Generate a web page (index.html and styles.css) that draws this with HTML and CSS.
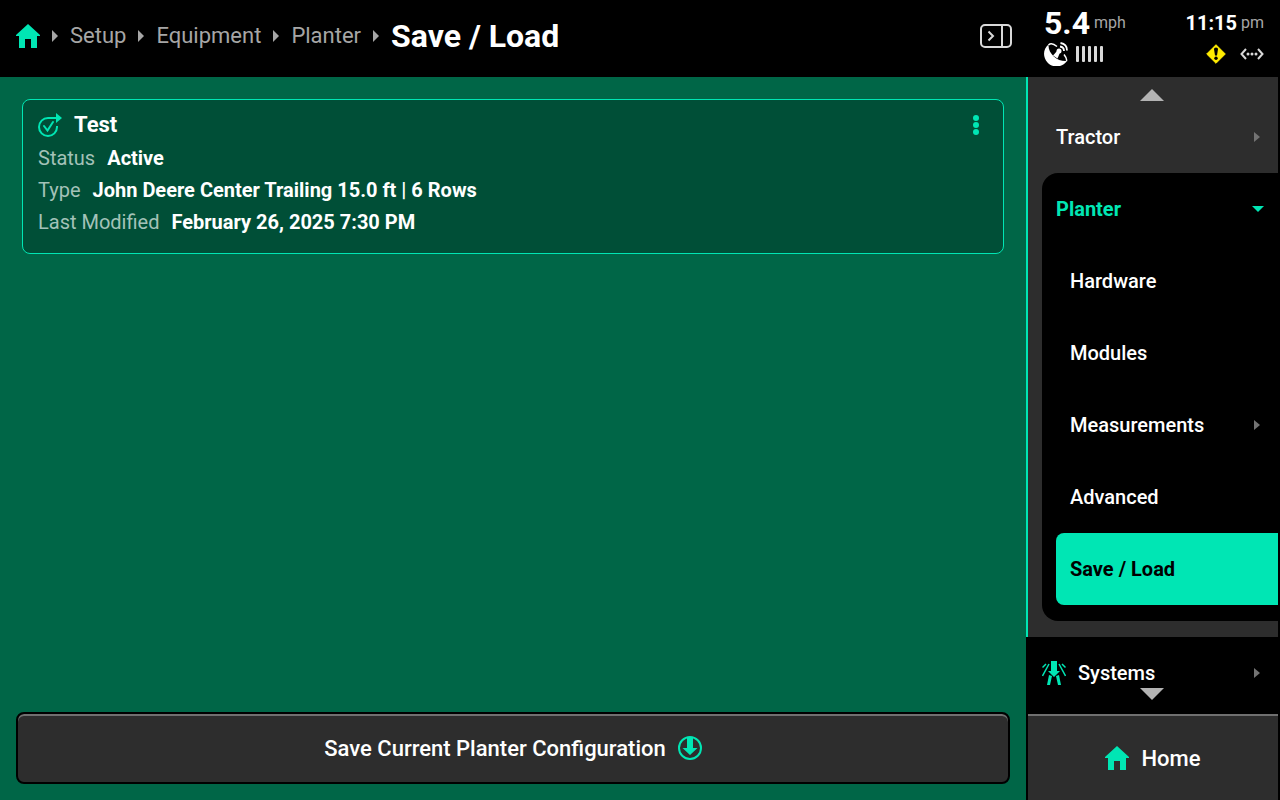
FILE: index.html
```html
<!DOCTYPE html>
<html lang="en">
<head>
<meta charset="utf-8">
<meta name="viewport" content="width=device-width, initial-scale=1">
<title>Save / Load</title>
<link rel="stylesheet" href="styles.css">
</head>
<body>
<div class="app">
  <header class="topbar">
    <nav class="crumbs" aria-label="Breadcrumb">
      <a class="home-link" href="#" aria-label="Home"><svg class="icon" viewBox="0 0 24 24"><path fill="currentColor" d="M12 0 24 11v1h-3v12h-6v-9H9v9H3V12H0v-1z"/></svg></a>
      <svg class="sep" viewBox="0 0 6 12"><path fill="currentColor" d="M0 0l6 6-6 6z"/></svg>
      <a href="#">Setup</a>
      <svg class="sep" viewBox="0 0 6 12"><path fill="currentColor" d="M0 0l6 6-6 6z"/></svg>
      <a href="#">Equipment</a>
      <svg class="sep" viewBox="0 0 6 12"><path fill="currentColor" d="M0 0l6 6-6 6z"/></svg>
      <a href="#">Planter</a>
      <svg class="sep" viewBox="0 0 6 12"><path fill="currentColor" d="M0 0l6 6-6 6z"/></svg>
      <h1>Save / Load</h1>
    </nav>
    <button class="panel-toggle" type="button" aria-label="Toggle side panel"><svg viewBox="0 0 32 24" fill="none" stroke="#d9d9d9" stroke-width="2"><rect x="1" y="1" width="30" height="22" rx="4"/><path d="M22 1v22M8.500 7.500l4.500 4.500-4.500 4.500"/></svg></button>
  </header>

  <section class="status" aria-label="Status">
    <div class="status-row">
      <div class="speed"><strong>5.4</strong><span>mph</span></div>
      <div class="clock"><strong>11:15</strong><span>pm</span></div>
    </div>
    <div class="status-row">
      <div class="gps">
        <svg class="icon" viewBox="0 0 24 24"><path fill="#fff" d="M4.500 2.500C-1 7-1.500 15 3.500 20.500S18 26 23 19C14 20 4 12 4.500 2.500z"/><path fill="none" stroke="#fff" stroke-width="1.500" d="M4.500 3C6.500 1 10 2 13 4.500M22.500 19C23 17 22 15 20 12.500"/><path fill="#fff" d="M9 13.500 13.500 8.500l2.500 2-2.500 6z"/><circle cx="15" cy="9" r="2.500" fill="#fff"/><path fill="none" stroke="#fff" stroke-width="1.800" d="M16 4.500q4 .5 4 4.500M16.500 1Q23 2 23 8.500"/></svg>
        <svg class="bars" viewBox="0 0 28 16" fill="#d9d9d9"><rect width="3" height="16" rx="1"/><rect x="6" width="3" height="16" rx="1"/><rect x="12" width="3" height="16" rx="1"/><rect x="18" width="3" height="16" rx="1"/><rect x="24" width="3" height="16" rx="1"/></svg>
      </div>
      <div class="alerts">
        <svg class="alert" viewBox="0 0 20 20"><path fill="#ffeb00" stroke="#ffeb00" stroke-linejoin="round" d="M10 .7 19.300 10 10 19.300.7 10z"/><path d="M8 5q0-1.500 2-1.500T12 5l-1 6.500H9z"/><circle cx="10" cy="14.200" r="1.700"/></svg>
        <svg class="icon" viewBox="0 0 24 24"><path fill="none" stroke="#d9d9d9" stroke-width="2" d="M6 7 1.500 12 6 17M18 7l4.500 5-4.500 5"/><g fill="#d9d9d9"><circle cx="8" cy="12" r="1.500"/><circle cx="12" cy="12" r="1.500"/><circle cx="16" cy="12" r="1.500"/></g></svg>
      </div>
    </div>
  </section>

  <main class="content">
    <article class="card">
      <div class="card-head">
        <svg class="icon" viewBox="0 0 24 24"><path fill="none" stroke="currentColor" stroke-width="2" d="M18 5H10A9 9 0 1 0 19 14v-1"/><path fill="none" stroke="currentColor" stroke-width="2" d="M6 13l3.500 4.500L15 9" stroke-linecap="round"/><path fill="currentColor" d="M18 0l6 5-6 5z"/></svg>
        <h2>Test</h2>
        <button class="more" type="button" aria-label="More options"><svg viewBox="0 0 6 20" fill="currentColor"><circle cx="3" cy="3" r="3"/><circle cx="3" cy="10" r="3"/><circle cx="3" cy="17" r="3"/></svg></button>
      </div>
      <dl>
        <div><dt>Status</dt><dd>Active</dd></div>
        <div><dt>Type</dt><dd>John Deere Center Trailing 15.0 ft | 6 Rows</dd></div>
        <div><dt>Last Modified</dt><dd>February 26, 2025 7:30 PM</dd></div>
      </dl>
    </article>
    <button class="save" type="button">Save Current Planter Configuration
      <svg class="icon" viewBox="0 0 24 24"><circle cx="12" cy="12" r="11" fill="none" stroke="currentColor" stroke-width="2"/><path fill="currentColor" d="M9 1h6v11h4.500L12 19l-7.500-7H9z"/></svg>
    </button>
  </main>

  <aside class="side">
    <nav class="menu" aria-label="Setup sections">
      <button class="scroll" type="button" aria-label="Scroll up"><svg viewBox="0 0 24 12"><path fill="currentColor" d="M12 0l12 12H0z"/></svg></button>
      <a class="item" href="#">Tractor<svg class="caret" viewBox="0 0 6 10"><path fill="currentColor" d="M0 0l6 5-6 5z"/></svg></a>
      <div class="group">
        <a class="item open" href="#">Planter<svg class="caret-down" viewBox="0 0 12 6"><path fill="currentColor" d="M0 0h12L6 6z"/></svg></a>
        <a class="item sub" href="#">Hardware</a>
        <a class="item sub" href="#">Modules</a>
        <a class="item sub" href="#">Measurements<svg class="caret" viewBox="0 0 6 10"><path fill="currentColor" d="M0 0l6 5-6 5z"/></svg></a>
        <a class="item sub" href="#">Advanced</a>
        <a class="item sub current" href="#" aria-current="page">Save / Load</a>
      </div>
    </nav>
    <div class="systems">
      <a class="item" href="#"><svg class="icon" viewBox="0 0 24 24"><path fill="currentColor" d="M9 0h6v10h3l-6 6-6-6h3zM7 14l3 1-2 9H5zM17 14l-3 1 2 9h3z"/><path fill="none" stroke="currentColor" stroke-width="1.500" d="M7 3 .5 15M17 3l6.500 12M4 3 .5 6.500M20 3l3.500 3.500"/></svg>Systems<svg class="caret" viewBox="0 0 6 10"><path fill="currentColor" d="M0 0l6 5-6 5z"/></svg></a>
      <button class="scroll down" type="button" aria-label="Scroll down"><svg viewBox="0 0 24 12"><path fill="currentColor" d="M0 0h24L12 12z"/></svg></button>
    </div>
    <a class="home" href="#"><svg class="icon" viewBox="0 0 24 24"><path fill="currentColor" d="M12 0 24 11v1h-3v12h-6v-9H9v9H3V12H0v-1z"/></svg>Home</a>
  </aside>
</div>
</body>
</html>
```

FILE: styles.css
```css
* { box-sizing: border-box; }

body {
  margin: 0;
  background: #000;
  color: #fff;
  font-family: Roboto, "Liberation Sans", sans-serif;
  font-size: 20px;
}

a { color: inherit; text-decoration: none; }

button {
  padding: 0;
  border: 0;
  background: none;
  color: inherit;
  font: inherit;
}

svg { display: block; flex: none; }
h1, h2, dl, dd { margin: 0; }
.icon { width: 24px; height: 24px; }

.app {
  display: grid;
  grid-template-columns: 1fr 254px;
  grid-template-rows: auto 1fr;
  min-height: 100vh;
}

/* Top bar */
.topbar {
  display: flex;
  align-items: center;
  justify-content: space-between;
  padding: 0 14px 5px 16px;
}

.crumbs {
  display: flex;
  align-items: center;
  gap: 12px;
  color: #a6a6a6;
  font-size: 22px;
  line-height: 28px;
}

.home-link, .card-head > .icon, .more, .save .icon, .systems .icon, .home .icon { color: #00e6b4; }
.crumbs .sep { width: 6px; height: 12px; }
.crumbs h1 { color: #fff; font-size: 32px; font-weight: 700; }
.panel-toggle svg { width: 32px; height: 24px; }

.status {
  display: flex;
  flex-direction: column;
  gap: 5px;
  padding: 9px 16px 11px 18px;
}

.status-row {
  display: flex;
  justify-content: space-between;
  align-items: center;
}

.speed, .clock { display: flex; align-items: center; gap: 4px; line-height: 28px; }
.speed strong { font-size: 32px; font-weight: 700; }
.clock strong { font-weight: 700; }
.speed span, .clock span { color: #a6a6a6; font-size: 16px; }
.gps { display: flex; align-items: center; gap: 8px; }
.bars { width: 28px; height: 16px; }
.alerts { display: flex; align-items: center; gap: 14px; }
.alert { width: 20px; height: 20px; }

/* Configuration list */
.content {
  display: flex;
  flex-direction: column;
  justify-content: space-between;
  padding: 16px;
  background: #006647;
}

.card {
  margin: 6px;
  padding: 8px 15px 15px;
  border: 1px solid #00e6b4;
  border-radius: 8px;
  background: #004f37;
}

.card-head {
  display: flex;
  align-items: center;
  gap: 12px;
  height: 34px;
}

.card h2 { flex: 1; font-size: 22px; font-weight: 700; line-height: 24px; }
.more { padding: 0 9px; }
.more svg { width: 6px; height: 20px; }
.card dl div { display: flex; gap: 12px; line-height: 32px; }
.card dt { color: #a3c2b8; }
.card dd { font-weight: 700; }

.save {
  display: flex;
  align-items: center;
  justify-content: center;
  gap: 12px;
  height: 72px;
  border: 2px solid #000;
  border-radius: 8px;
  background: #2d2d2d;
  box-shadow: inset 0 2px #707070;
  font-size: 22px;
  font-weight: 500;
}

/* Side menu */
.side {
  display: flex;
  flex-direction: column;
  padding-right: 2px;
  font-weight: 500;
}

.menu {
  padding: 12px 0 16px 14px;
  border-left: 2px solid #00e6b4;
  background: #2d2d2d;
}

.scroll { display: block; margin: 0 auto; color: #b3b3b3; }
.scroll svg { width: 24px; height: 12px; }
.menu .scroll { padding-right: 16px; }

.item {
  display: flex;
  align-items: center;
  gap: 12px;
  height: 72px;
  padding: 0 18px 0 14px;
}

.caret { width: 6px; height: 10px; margin-left: auto; color: #737373; }
.caret-down { width: 12px; height: 6px; margin-left: auto; }
.group { padding-bottom: 16px; border-radius: 16px 0 0 16px; background: #000; }
.open { padding-right: 14px; color: #00e6b4; font-weight: 700; }
.sub { margin-left: 14px; }
.current { border-radius: 8px 0 0 8px; background: #00e6b4; color: #000; font-weight: 700; }

.systems { position: relative; height: 77px; padding-left: 2px; }
.scroll.down { position: absolute; right: 0; bottom: 14px; left: 0; width: 24px; }

.home {
  display: flex;
  flex: 1;
  align-items: center;
  justify-content: center;
  gap: 12px;
  margin-left: 2px;
  border-top: 2px solid #707070;
  background: #2d2d2d;
  font-size: 22px;
}
```
